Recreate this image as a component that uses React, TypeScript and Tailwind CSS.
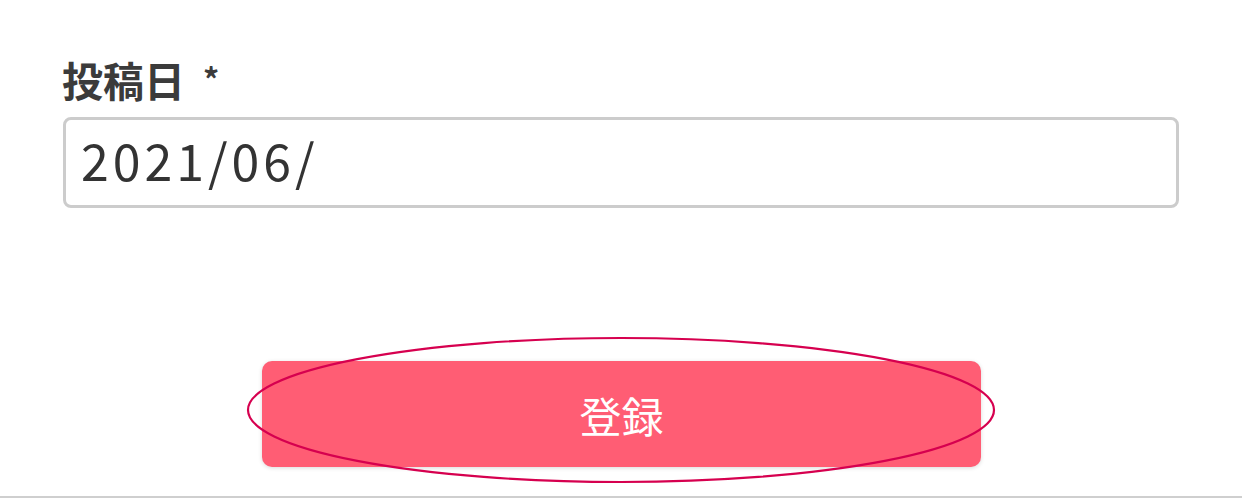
import React from 'react';

const jp = { fontFamily: '"Noto Sans CJK JP", "Noto Sans", sans-serif' };

export default function App() {
  return (
    <div className="relative h-[498px] w-full overflow-hidden bg-white" style={jp}>
      <div className="px-[63px] pt-[59px]">
        <label className="flex items-center gap-[18px] text-[41px] font-bold leading-none text-[#3b3b3b]">
          <span className="-ml-[1px]">投稿日</span>
          <span className="-mt-[4px] text-[32px]">*</span>
        </label>
        <div className="mt-[17px] flex h-[91px] items-center rounded-[8px] border-[3px] border-[#cccccc] px-[15px]">
          <span className="-mt-[8px] text-[50px] font-normal leading-none tracking-[4px] text-[#333333]">2021/06/</span>
        </div>
      </div>
      <div className="mt-[153px] flex justify-center pl-[1px]">
        <button className="flex h-[106px] w-[719px] items-center justify-center rounded-[10px] bg-[#ff5d74] text-[42px] text-white shadow-[0_1px_4px_rgba(0,0,0,0.15)]">
          登録
        </button>
      </div>
      <div className="absolute bottom-0 left-0 h-[2px] w-full bg-[#cfcfcf]" />
      <svg className="pointer-events-none absolute left-0 top-0" width="1242" height="498">
        <ellipse cx="621" cy="410" rx="373" ry="72" fill="none" stroke="#d6004f" strokeWidth="2.2" />
      </svg>
    </div>
  );
}
